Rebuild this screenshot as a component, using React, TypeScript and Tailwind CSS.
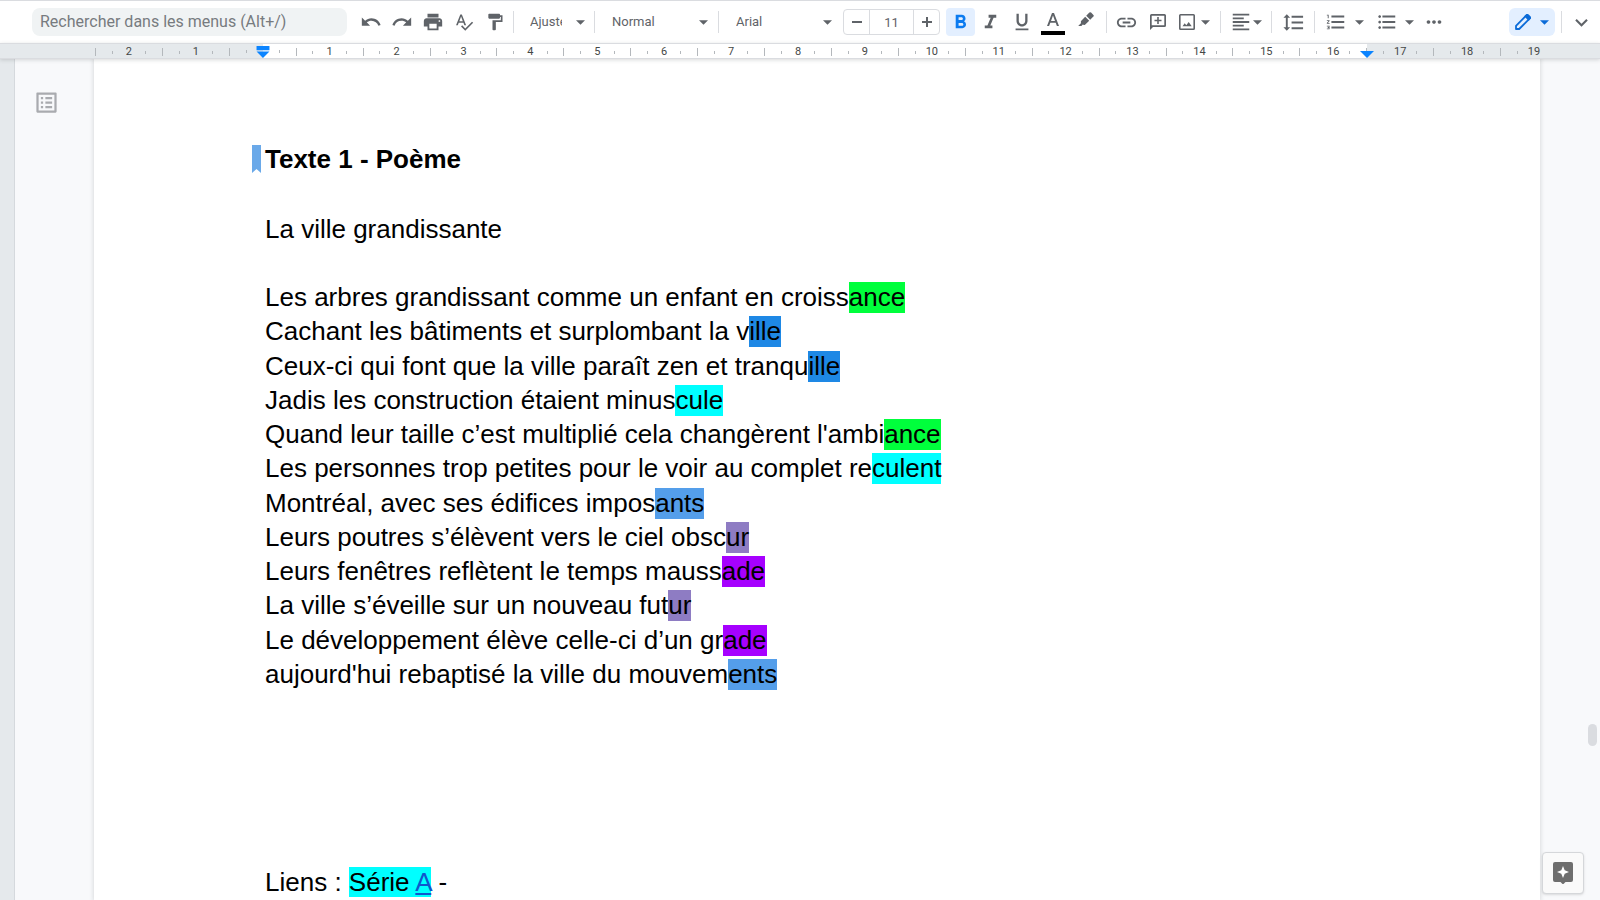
import type { ReactNode } from 'react'
import {
   MdFormatAlignLeft,
   MdFormatBold,
   MdFormatItalic,
   MdFormatLineSpacing,
   MdFormatListBulleted,
   MdFormatListNumbered,
   MdFormatPaint,
   MdFormatUnderlined,
   MdKeyboardArrowDown,
   MdLink,
   MdMoreHoriz,
   MdOutlineListAlt,
   MdPrint,
   MdRedo,
   MdSpellcheck,
   MdUndo,
} from 'react-icons/md'

const poem = [
   { text: 'Les arbres grandissant comme un enfant en croiss', rhyme: 'ance', color: 'bg-[#00ff3c]' },
   { text: 'Cachant les bâtiments et surplombant la v', rhyme: 'ille', color: 'bg-[#1e88e5]' },
   { text: 'Ceux-ci qui font que la ville paraît zen et tranqu', rhyme: 'ille', color: 'bg-[#1e88e5]' },
   { text: 'Jadis les construction étaient minus', rhyme: 'cule', color: 'bg-[#00ffff]' },
   { text: 'Quand leur taille c’est multiplié cela changèrent l\'ambi', rhyme: 'ance', color: 'bg-[#00ff3c]' },
   { text: 'Les personnes trop petites pour le voir au complet re', rhyme: 'culent', color: 'bg-[#00ffff]' },
   { text: 'Montréal, avec ses édifices impos', rhyme: 'ants', color: 'bg-[#549eea]' },
   { text: 'Leurs poutres s’élèvent vers le ciel obsc', rhyme: 'ur', color: 'bg-[#8e7cc3]' },
   { text: 'Leurs fenêtres reflètent le temps mauss', rhyme: 'ade', color: 'bg-[#a600ff]' },
   { text: 'La ville s’éveille sur un nouveau fut', rhyme: 'ur', color: 'bg-[#8e7cc3]' },
   { text: 'Le développement élève celle-ci d’un gr', rhyme: 'ade', color: 'bg-[#a600ff]' },
   { text: 'aujourd\'hui rebaptisé la ville du mouvem', rhyme: 'ents', color: 'bg-[#549eea]' },
]

// centimetres, counted from the left margin
const rulerMarks = Array.from({ length: 22 }, (_, i) => i - 2)

function Caret() {
   return (
      <svg viewBox="0 0 10 5" className="h-[5px] w-[9px] shrink-0 fill-current" aria-hidden="true">
         <path d="M0 0h10L5 5z" />
      </svg>
   )
}

function Separator({ className = '' }: { className?: string }) {
   return <div className={`h-[22px] w-px shrink-0 bg-[#dadce0] ${className}`} />
}

function ToolButton({ label, children }: { label: string; children: ReactNode }) {
   return (
      <button type="button" aria-label={label} className="flex h-7 w-[31px] shrink-0 items-center justify-center">
         {children}
      </button>
   )
}

function MenuButton({ label, className, children }: { label: string; className: string; children: ReactNode }) {
   return (
      <button type="button" aria-label={label} className={`flex h-7 shrink-0 items-center px-1 ${className}`}>
         {children}
         <Caret />
      </button>
   )
}

function ToolSelect({ label, value, className }: { label: string; value: string; className: string }) {
   return (
      <div className="ml-4 flex shrink-0 items-center">
         <select aria-label={label} className={`h-7 appearance-none overflow-hidden text-clip bg-transparent text-[13px] leading-7 outline-none ${className}`}>
            <option>{value}</option>
         </select>
         <Caret />
      </div>
   )
}

function Toolbar() {
   return (
      <div className="flex h-[43px] shrink-0 items-center border-t border-[#dadce0] bg-white text-[#5f6368]">
         <input
            type="text"
            aria-label="Rechercher dans les menus"
            placeholder="Rechercher dans les menus (Alt+/)"
            className="ml-8 h-7 w-[315px] shrink-0 rounded-lg bg-[#f0f3f4] px-2 pb-0.5 text-base outline-none placeholder:text-[#777b7f]"
         />
         <div className="ml-2 flex">
            <ToolButton label="Annuler"><MdUndo size={22} /></ToolButton>
            <ToolButton label="Rétablir"><MdRedo size={22} /></ToolButton>
            <ToolButton label="Imprimer"><MdPrint size={22} /></ToolButton>
            <ToolButton label="Orthographe"><MdSpellcheck size={20} /></ToolButton>
            <ToolButton label="Reproduire la mise en forme"><MdFormatPaint size={20} /></ToolButton>
         </div>
         <Separator className="ml-[3px]" />
         <ToolSelect label="Zoom" value="Ajuster" className="mr-3.5 w-8" />
         <Separator className="ml-[9px]" />
         <ToolSelect label="Styles" value="Normal" className="w-[88px] pl-px" />
         <Separator className="ml-2.5" />
         <ToolSelect label="Police" value="Arial" className="w-[88px] pl-px" />

         <div className="ml-[11px] flex h-[26px] shrink-0 items-center rounded-sm border border-[#dadce0]">
            <button type="button" aria-label="Réduire la taille" className="flex h-6 w-[25px] items-center justify-center">
               <svg viewBox="0 0 10 10" className="size-2.5 fill-current"><path d="M0 4h10v2H0z" /></svg>
            </button>
            <input
               type="text"
               aria-label="Taille de police"
               defaultValue="11"
               className="h-6 w-[45px] border-x border-[#dadce0] text-center text-[13px] outline-none"
            />
            <button type="button" aria-label="Augmenter la taille" className="flex h-6 w-[25px] items-center justify-center">
               <svg viewBox="0 0 10 10" className="size-2.5 fill-current"><path d="M0 4h4V0h2v4h4v2H6v4H4V6H0z" /></svg>
            </button>
         </div>

         <button type="button" aria-label="Gras" aria-pressed="true" className="ml-1.5 flex h-7 w-[29px] shrink-0 items-center justify-center rounded-sm bg-[#e3efff] text-[#0b7bf0]">
            <MdFormatBold size={23} />
         </button>
         <ToolButton label="Italique"><MdFormatItalic size={23} /></ToolButton>
         <ToolButton label="Souligné"><MdFormatUnderlined size={22} /></ToolButton>
         <ToolButton label="Couleur du texte">
            <svg viewBox="0 0 24 28" className="h-7 w-6 fill-current">
               <path d="M11 5 6 18h2.100l1.200-3.300h5.400l1.200 3.300H18L13 5zm-1 7.900L12 7.400l2 5.500z" />
               <path d="M0 23h24v4H0z" className="fill-black" />
            </svg>
         </ToolButton>
         <button type="button" aria-label="Couleur de surlignage" className="flex h-7 w-9 shrink-0 items-center justify-center pb-1">
            <svg viewBox="0 0 16 16" className="size-4 fill-current">
               <path d="M11.400.6a1.200 1.200 0 0 1 1.700 0l2.300 2.300a1.200 1.200 0 0 1 0 1.700L12.200 7.800 8.200 3.800zM7.200 4.800l4 4-3.900 3.600a2 2 0 0 1-2.500.1L3.400 14H.2l2.900-3.100a2 2 0 0 1 .2-2.200z" />
            </svg>
         </button>

         <Separator className="ml-0.5 mr-1" />
         <ToolButton label="Insérer un lien"><MdLink size={23} /></ToolButton>
         <ToolButton label="Ajouter un commentaire">
            <svg viewBox="0 0 16 16" className="size-4 fill-current">
               <path d="M1.500 0h13A1.500 1.500 0 0 1 16 1.500v10a1.500 1.500 0 0 1-1.500 1.500H3l-3 3V1.500A1.500 1.500 0 0 1 1.500 0zM1.700 1.700v9.600h12.600V1.700zM7.200 3h1.600v2.700h2.700v1.600H8.800V10H7.200V7.300H4.500V5.700h2.700z" />
            </svg>
         </ToolButton>
         <MenuButton label="Insérer une image" className="ml-0.5 gap-1.5">
            <svg viewBox="0 0 16 16" className="size-4 fill-current">
               <path d="M1.500 0h13A1.500 1.500 0 0 1 16 1.500v13a1.500 1.500 0 0 1-1.500 1.500h-13A1.500 1.500 0 0 1 0 14.500v-13A1.500 1.500 0 0 1 1.500 0zM1.600 1.600v12.800h12.800V1.600zM3.500 12.300l2.200-3 1.600 1.900 2.400-3.200 3 4.300z" />
            </svg>
         </MenuButton>
         <Separator className="ml-1.5 mr-[5px]" />
         <MenuButton label="Alignement" className="gap-px"><MdFormatAlignLeft size={22} /></MenuButton>
         <Separator className="ml-[5px] mr-1.5" />
         <ToolButton label="Interligne"><MdFormatLineSpacing size={23} /></ToolButton>
         <Separator className="ml-[5px] mr-1.5" />
         <MenuButton label="Liste numérotée" className="gap-2"><MdFormatListNumbered size={22} /></MenuButton>
         <MenuButton label="Liste à puces" className="ml-1 gap-[7px]"><MdFormatListBulleted size={22} /></MenuButton>
         <ToolButton label="Plus"><MdMoreHoriz size={22} /></ToolButton>

         <button type="button" aria-label="Mode édition" className="ml-auto flex h-7 w-[46px] shrink-0 items-center justify-center gap-[9px] rounded-md bg-[#e3efff] text-[#0b6bd8]">
            <svg viewBox="0 0 16 16" className="size-4" fill="none" stroke="currentColor" strokeWidth="1.800" strokeLinejoin="round">
               <path d="M1 15v-3.200L11.600 1.200a1 1 0 0 1 1.400 0l1.800 1.800a1 1 0 0 1 0 1.400L4.200 15z" />
               <path d="M10.500 2.300l3.200 3.200 1.300-1.500-3-3z" fill="currentColor" />
            </svg>
            <Caret />
         </button>
         <Separator className="ml-1.5" />
         <button type="button" aria-label="Masquer les menus" className="flex h-7 w-[38px] shrink-0 items-center justify-center">
            <MdKeyboardArrowDown size={25} />
         </button>
      </div>
   )
}

function Ruler() {
   return (
      <div className="relative z-10 h-4 shrink-0 overflow-hidden border-y border-[#dadce0] bg-[linear-gradient(to_right,#e5e9ec_263px,white_263px,white_1367px,#e5e9ec_1367px)] shadow-[0_1px_4px_rgba(60,64,67,0.2)]">
         <div className="ml-[95px] flex h-full w-[1472px] pt-px">
            {rulerMarks.map((n) => (
               <div key={n} className="grid flex-1 grid-cols-[1fr_2fr_1fr] items-center text-[11px] leading-[14px] text-[#444746]">
                  <div className="h-2 border-l border-[#b4b8bc]" />
                  <div className="flex items-center">
                     <div className="h-[3px] w-px bg-[#b4b8bc]" />
                     <span className="flex-1 text-center">{n === 0 ? '' : Math.abs(n)}</span>
                  </div>
                  {n < 19 && <div className="h-[3px] border-l border-[#b4b8bc]" />}
               </div>
            ))}
         </div>
         <svg viewBox="0 0 14 13" className="absolute left-[256px] top-0.5 h-3 w-[14px] fill-[#0b84ff]" aria-hidden="true">
            <path d="M0 0h14v4.500H0zM0 6h14l-7 7z" />
         </svg>
         <svg viewBox="0 0 14 7" className="absolute left-[1360px] top-[7px] h-[7px] w-[14px] fill-[#0b84ff]" aria-hidden="true">
            <path d="M0 0h14L7 7z" />
         </svg>
      </div>
   )
}

function Page() {
   return (
      <article className="relative min-w-0 flex-1 bg-white pl-[171px] pt-[83px] font-['Liberation_Sans',Arial,sans-serif] text-[26px] leading-[34px] text-black shadow-[0_0_4px_1px_rgba(60,64,67,0.15)]">
         <h1 className="relative font-bold">
            <svg viewBox="0 0 10 28" className="absolute -left-[13px] top-[3px] h-7 w-2.5 fill-[#6aa9e9]" aria-hidden="true">
               <path d="M0 0h9v28l-4.500-4L0 28z" />
            </svg>
            Texte 1 - Poème
         </h1>
         <p className="mt-9">La ville grandissante</p>
         <ul className="mt-[34px]">
            {poem.map((line) => (
               <li key={line.text} className="whitespace-nowrap nth-[4n+3]:pt-px">
                  {line.text}
                  <span className={`pb-px ${line.color}`}>{line.rhyme}</span>
               </li>
            ))}
         </ul>
         <p className="mt-[174px]">
            Liens :{' '}
            <span className="bg-[#00ffff]">
               Série <a href="#serie-a" className="text-[#1155cc] underline">A</a>
            </span>{' '}
            -
         </p>
      </article>
   )
}

export default function App() {
   return (
      <div className="relative flex h-screen flex-col overflow-hidden bg-[#f8f9fb] font-[Roboto,sans-serif]">
         <Toolbar />
         <Ruler />
         <main className="flex min-h-0 flex-1">
            <div className="w-[15px] shrink-0 border-r border-[#d5d9dd] bg-[#e5e9ec]" />
            <div className="w-[79px] shrink-0 pl-[18px] pt-[30px]">
               <button type="button" aria-label="Afficher le plan" className="block text-[#a9abaf]">
                  <MdOutlineListAlt size={27} />
               </button>
            </div>
            <Page />
            <div className="w-[60px] shrink-0" />
         </main>

         <div className="absolute right-[3px] top-[724px] h-[22px] w-[9px] rounded-full bg-[#dadce0]" />
         <button type="button" aria-label="Explorer" className="absolute bottom-1.5 right-4 flex size-[42px] items-center justify-center rounded-sm border border-[#d5d7da] bg-[#fafafa] text-[#6e6e6e] shadow-sm">
            <svg viewBox="0 0 20 22" className="h-[22px] w-5 fill-current">
               <path d="M2 0h16a2 2 0 0 1 2 2v16a2 2 0 0 1-2 2h-5.500L10 22.500 7.500 20H2a2 2 0 0 1-2-2V2a2 2 0 0 1 2-2z" />
               <path d="M10 4l1.700 4.300L16 10l-4.300 1.700L10 16l-1.700-4.300L4 10l4.300-1.700z" className="fill-white" />
            </svg>
         </button>
      </div>
   )
}
